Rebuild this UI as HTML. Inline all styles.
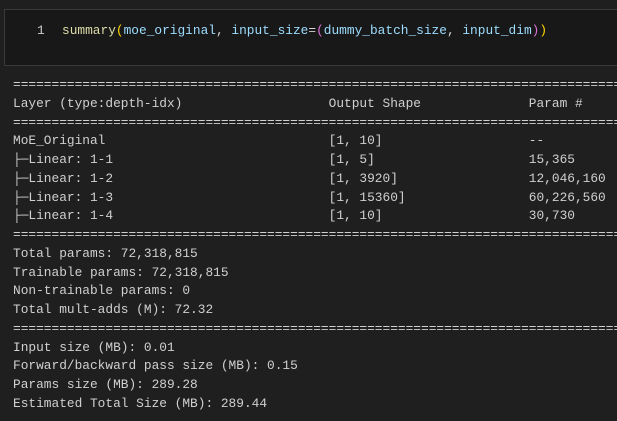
<!DOCTYPE html>
<html><head><style>
html,body{margin:0;padding:0;width:617px;height:421px;overflow:hidden;background:#1f1f1f;}
.cell{position:absolute;left:4px;top:9px;width:640px;height:55px;background:#181818;border:1px solid #3a3a3a;}
.code{position:absolute;left:0;top:22px;font-family:"Liberation Mono",monospace;font-size:12.83px;line-height:18px;white-space:pre;color:#9cdcfe;}
.ln{position:absolute;left:37px;color:#cccccc;}
.src{position:absolute;left:62px;}
.fn{color:#dcdcaa}.p1{color:#ffd700}.p2{color:#da70d6}.op{color:#d4d4d4}
.out{position:absolute;left:13px;top:76px;font-family:"Liberation Mono",monospace;font-size:12.83px;line-height:18.76px;white-space:pre;color:#d0d0d0;width:604px;overflow:hidden;}
</style></head><body>
<div class="cell"></div>
<div class="code"><span class="ln">1</span><span class="src"><span class="fn">summary</span><span class="p1">(</span>moe_original<span class="op">, </span>input_size<span class="op">=</span><span class="p2">(</span>dummy_batch_size<span class="op">, </span>input_dim<span class="p2">)</span><span class="p1">)</span></span></div>
<div class="out">==========================================================================================
Layer (type:depth-idx)                   Output Shape              Param #
==========================================================================================
MoE_Original                             [1, 10]                   --
├─Linear: 1-1                            [1, 5]                    15,365
├─Linear: 1-2                            [1, 3920]                 12,046,160
├─Linear: 1-3                            [1, 15360]                60,226,560
├─Linear: 1-4                            [1, 10]                   30,730
==========================================================================================
Total params: 72,318,815
Trainable params: 72,318,815
Non-trainable params: 0
Total mult-adds (M): 72.32
==========================================================================================
Input size (MB): 0.01
Forward/backward pass size (MB): 0.15
Params size (MB): 289.28
Estimated Total Size (MB): 289.44</div>
</body></html>
